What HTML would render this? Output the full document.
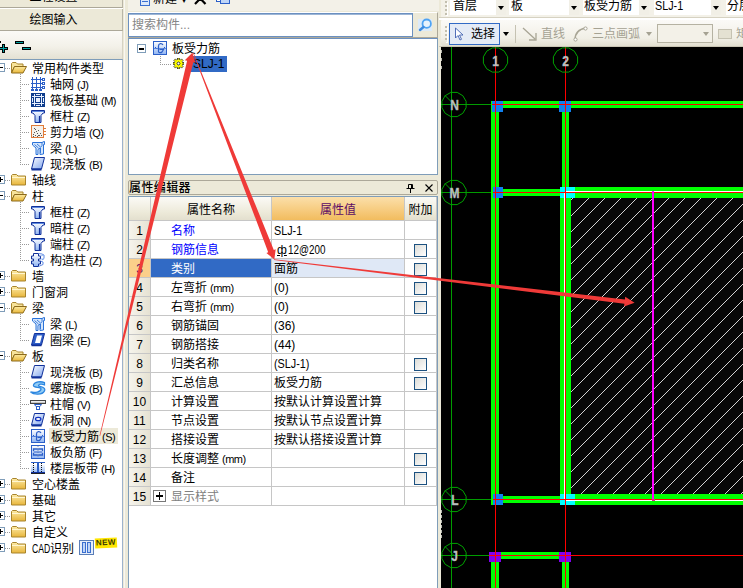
<!DOCTYPE html>
<html lang="zh"><head><meta charset="utf-8"><title>属性编辑器</title>
<style>
*{box-sizing:border-box;margin:0;padding:0}
html,body{width:743px;height:588px;overflow:hidden;background:#ECE9D8}
body{position:relative;font:12px/16px "Liberation Sans","Noto Sans CJK SC",sans-serif;color:#000}
.abs,.exp,.dh,.dv,.ic,.tx,.gh,.gn,.gc,.cb{position:absolute}
.p{letter-spacing:-0.5px;padding-left:3px;font-size:11px}
.exp{width:9px;height:9px;border:1px solid #7F9DB9;background:#fff}
.exp .h{position:absolute;left:1px;top:3px;width:5px;height:1px;background:#000}
.exp.b .h{height:2px}
.exp .v{position:absolute;left:3px;top:1px;width:1px;height:5px;background:#000}
.dh{height:1px;background-image:linear-gradient(90deg,#999 50%,transparent 50%);background-size:2px 1px}
.dv{width:1px;background-image:linear-gradient(180deg,#999 50%,transparent 50%);background-size:1px 2px}
.ic{height:16px;line-height:0}
.ic svg{display:block}
.tx{height:16px;line-height:18px;white-space:nowrap;padding:0;margin-left:0px;overflow:visible}
.tx.sel{background:#ECE9D8;padding:0 3px 0 2px}
.gh{background:linear-gradient(#FBFAF6,#ECE9D8 70%,#E3DFCE);text-align:center;line-height:26px;border-bottom:0;overflow:hidden}
.ghsel{background:linear-gradient(#FBDFAA,#F7CE84 50%,#F2BC5E);color:#5C0B66}
.gn{background:linear-gradient(90deg,#F6F4EC,#E6E2D3);text-align:center;line-height:21px;font-size:12px;overflow:hidden}
.gnsel{background:#FBCF8A;color:#5C0B66}
.gc{background:#fff;line-height:21px;white-space:nowrap;overflow:hidden}
.gcsel{background:#316AC5;color:#fff}
.phi{text-decoration:underline;padding:0 1px 0 3px}
.lt{display:inline-block;transform:scaleX(0.9);transform-origin:0 50%}
.cb{width:13px;height:13px;border:1px solid #1C5180;background:linear-gradient(135deg,#DCDCD7,#fff)}
.plus{position:absolute;left:2px;top:3px;width:13px;height:12px;border:1px solid #777;background:#fff}
.plus:before{content:"";position:absolute;left:2px;top:4px;width:7px;height:2px;background:#000}
.plus:after{content:"";position:absolute;left:5px;top:1px;width:1px;height:8px;background:#000}

.combo{top:-3px;height:18px;background:#fff;line-height:18px;padding-left:3px;white-space:nowrap;overflow:hidden}
.combo:after{content:"";position:absolute;right:0;top:0;width:10px;height:18px;background:#F1EFE6}
.combo:before{content:"";position:absolute;right:2px;top:9px;border:3px solid transparent;border-top:4px solid #000;border-bottom:0;z-index:2}
.grip{width:2px;background-image:linear-gradient(180deg,#C2BFAF 50%,transparent 50%);background-size:2px 4px;box-shadow:1px 1px 0 #fff}
.arr{width:0;height:0;border:3px solid transparent;border-top:4px solid #000;border-bottom:0}
</style></head><body>
<svg width="0" height="0" style="position:absolute"><defs><linearGradient id="gb" x1="0" y1="0" x2="0" y2="1"><stop offset="0" stop-color="#fff"/><stop offset="1" stop-color="#8FB4F2"/></linearGradient><linearGradient id="gs" x1="0" y1="0" x2="1" y2="1"><stop offset="0" stop-color="#fff"/><stop offset="1" stop-color="#7EA4EE"/></linearGradient></defs><defs><linearGradient id="fo" x1="0" y1="0" x2="0" y2="1"><stop offset="0" stop-color="#FCE9A0"/><stop offset="1" stop-color="#E9B738"/></linearGradient><linearGradient id="fc" x1="0" y1="0" x2="0" y2="1"><stop offset="0" stop-color="#FCEBA8"/><stop offset="1" stop-color="#E8B53A"/></linearGradient></defs></svg>
<!-- left panel -->
<div class="abs" style="left:0;top:-12px;width:123px;height:20px;background:#ECE9D8;border-bottom:1px solid #ACA899;border-right:1px solid #B8B5A6;text-align:center;line-height:18px;padding-right:15px">工程设置</div>
<div class="abs" style="left:0;top:8px;width:123px;height:1px;background:#fff"></div>
<div class="abs" style="left:0;top:9px;width:123px;height:22px;background:#ECE9D8;border-bottom:1px solid #ACA899;border-right:1px solid #B8B5A6;text-align:center;line-height:22px;padding-right:15px">绘图输入</div>
<div class="abs" style="left:0;top:31px;width:123px;height:28px;background:linear-gradient(#FBFAF7,#F3F1E9 55%,#E4E1D3);border-right:1px solid #D5D2C3"></div>
<div class="abs" style="left:2px;top:44px;width:3px;height:9px;background:#000"></div>
<div class="abs" style="left:-1px;top:47px;width:9px;height:3px;background:#000"></div>
<div class="abs" style="left:3px;top:45px;width:1px;height:7px;background:#00A0A0"></div>
<div class="abs" style="left:0px;top:48px;width:7px;height:1px;background:#00A0A0"></div>
<div class="abs" style="left:0px;top:41px;width:1px;height:2px;background:#000"></div>
<div class="abs" style="left:15px;top:41px;width:9px;height:3px;background:#000"></div>
<div class="abs" style="left:16px;top:42px;width:7px;height:1px;background:#00A0A0"></div>
<div class="abs" style="left:22px;top:47px;width:9px;height:3px;background:#000"></div>
<div class="abs" style="left:23px;top:48px;width:7px;height:1px;background:#00A0A0"></div>
<div class="abs" style="left:0;top:59px;width:123px;height:529px;background:#fff;border-top:1px solid #7F9DB9;border-right:1px solid #9DB2CC"></div>
<div class="exp" style="left:-4px;top:63px"><i class="h"></i></div>
<div class="dh" style="left:5px;top:68px;width:6px"></div>
<div class="ic" style="left:11px;top:62px"><svg width="16" height="12" viewBox="0 0 16 12"><path d="M0.500 1.500l1-1h3.500l1.500 1.500h5.500v2.500h-8.500l-3 6z" fill="#F7E39A" stroke="#A8842C" stroke-width="1"/><path d="M3.500 4.500h12l-3.500 6.500h-11.500z" fill="url(#fo)" stroke="#8C6A1C" stroke-width="1"/></svg></div>
<div class="tx" style="left:32px;top:60px">常用构件类型</div>
<div class="dh" style="left:20px;top:84px;width:10px"></div>
<div class="ic" style="left:31px;top:77px"><svg width="14" height="14" viewBox="0 0 14 14" ><g fill="#2B5FC8" shape-rendering="crispEdges"><rect x="1" y="0" width="1" height="13"/><rect x="5" y="0" width="1" height="13"/><rect x="9" y="0" width="1" height="13"/><rect x="0" y="2" width="12" height="1"/><rect x="0" y="6" width="12" height="1"/><rect x="0" y="10" width="12" height="1"/><rect x="0" y="12" width="3" height="2"/><rect x="4" y="12" width="3" height="2"/><rect x="8" y="12" width="3" height="2"/></g><g fill="#fff" stroke="#2B5FC8" stroke-width="1" shape-rendering="crispEdges"><rect x="11.5" y="1.5" width="2" height="2"/><rect x="11.5" y="5.5" width="2" height="2"/><rect x="11.5" y="9.5" width="2" height="2"/></g></svg></div>
<div class="tx" style="left:50px;top:76px">轴网<span class="p">(J)</span></div>
<div class="dh" style="left:20px;top:100px;width:10px"></div>
<div class="ic" style="left:31px;top:93px"><svg width="14" height="14" viewBox="0 0 14 14" ><g shape-rendering="crispEdges"><rect x="0" y="0" width="14" height="14" fill="#0E3C8C"/><g fill="#E8F0FF"><rect x="3" y="1" width="1" height="12"/><rect x="10" y="1" width="1" height="12"/><rect x="1" y="3" width="12" height="1"/><rect x="1" y="10" width="12" height="1"/><rect x="5" y="5" width="4" height="4"/><rect x="5" y="1" width="4" height="1"/><rect x="5" y="12" width="4" height="1"/><rect x="1" y="5" width="1" height="4"/><rect x="12" y="5" width="1" height="4"/></g></g></svg></div>
<div class="tx" style="left:50px;top:92px">筏板基础<span class="p">(M)</span></div>
<div class="dh" style="left:20px;top:116px;width:10px"></div>
<div class="ic" style="left:31px;top:109px"><svg width="14" height="14" viewBox="0 0 14 14" ><path d="M0.500 1.500h13v2.500h-1.500l-2 2.500v7h-6v-7l-2-2.500h-1.500z" fill="url(#gb)" stroke="#10309A" stroke-width="1"/><path d="M1 2.500h12" stroke="#5F8AE0" stroke-width="1"/><path d="M8.500 7v6" stroke="#10309A" stroke-width="1.200"/></svg></div>
<div class="tx" style="left:50px;top:108px">框柱<span class="p">(Z)</span></div>
<div class="dh" style="left:20px;top:132px;width:10px"></div>
<div class="ic" style="left:31px;top:125px"><svg width="15" height="14" viewBox="0 0 15 14" ><g shape-rendering="crispEdges"><rect x="0.5" y="0.5" width="12" height="12" fill="#F4F1EC" stroke="#E07B39" stroke-width="1"/><g fill="#555"><rect x="2" y="9" width="1" height="1"/><rect x="4" y="10" width="1" height="1"/><rect x="6" y="8" width="1" height="1"/><rect x="8" y="10" width="1" height="1"/><rect x="5" y="6" width="1" height="1"/><rect x="3" y="7" width="1" height="1"/><rect x="9" y="8" width="1" height="1"/><rect x="7" y="10" width="1" height="1"/><rect x="10" y="10" width="1" height="1"/><rect x="2" y="11" width="1" height="1"/><rect x="4" y="4" width="1" height="1"/><rect x="6" y="11" width="1" height="1"/><rect x="7" y="5" width="1" height="1"/><rect x="3" y="3" width="1" height="1"/></g><g fill="#E07B39"><rect x="12" y="3" width="3" height="1"/><rect x="12" y="6" width="3" height="1"/><rect x="12" y="9" width="3" height="1"/></g></g></svg></div>
<div class="tx" style="left:50px;top:124px">剪力墙<span class="p">(Q)</span></div>
<div class="dh" style="left:20px;top:148px;width:10px"></div>
<div class="ic" style="left:31px;top:141px"><svg width="14" height="14" viewBox="0 0 14 14" ><path d="M1.500 1.500h9.500l2-1h0.500v3h-1v9.500l-3.500 0.500v-6.500l-2 1.500v5h-2v-6.500l-3.500-3z" fill="#D5E6FB" stroke="#2A72D8" stroke-width="1"/><path d="M3.500 3.500l4 3.500M6 3l3.500 3M9.500 7v5" stroke="#2A72D8" stroke-width="0.900" fill="none"/><path d="M11 1.500v3l-1.500 2" stroke="#2A72D8" stroke-width="0.900" fill="none"/></svg></div>
<div class="tx" style="left:50px;top:140px">梁<span class="p">(L)</span></div>
<div class="dh" style="left:20px;top:164px;width:10px"></div>
<div class="ic" style="left:31px;top:157px"><svg width="14" height="14" viewBox="0 0 14 14" ><path d="M3.500 0.500h10l-3 11.500h-10z" fill="url(#gs)" stroke="#10309A" stroke-width="1"/><path d="M0.500 12.500h10" stroke="#10309A" stroke-width="2"/></svg></div>
<div class="tx" style="left:50px;top:156px">现浇板<span class="p">(B)</span></div>
<div class="exp" style="left:-4px;top:175px"><i class="h"></i><i class=v></i></div>
<div class="dh" style="left:5px;top:180px;width:6px"></div>
<div class="ic" style="left:11px;top:174px"><svg width="16" height="12" viewBox="0 0 16 12"><path d="M0.500 1.500l1-1h4l1.500 1.500h7.500v9h-14z" fill="url(#fc)" stroke="#A8842C" stroke-width="1"/><path d="M1 3.500h13" stroke="#FFF6D0" stroke-width="1"/></svg></div>
<div class="tx" style="left:32px;top:172px">轴线</div>
<div class="exp" style="left:-4px;top:191px"><i class="h"></i></div>
<div class="dh" style="left:5px;top:196px;width:6px"></div>
<div class="ic" style="left:11px;top:190px"><svg width="16" height="12" viewBox="0 0 16 12"><path d="M0.500 1.500l1-1h3.500l1.500 1.500h5.500v2.500h-8.500l-3 6z" fill="#F7E39A" stroke="#A8842C" stroke-width="1"/><path d="M3.500 4.500h12l-3.500 6.500h-11.500z" fill="url(#fo)" stroke="#8C6A1C" stroke-width="1"/></svg></div>
<div class="tx" style="left:32px;top:188px">柱</div>
<div class="dh" style="left:20px;top:212px;width:10px"></div>
<div class="ic" style="left:31px;top:205px"><svg width="14" height="14" viewBox="0 0 14 14" ><path d="M0.500 1.500h13v2.500h-1.500l-2 2.500v7h-6v-7l-2-2.500h-1.500z" fill="url(#gb)" stroke="#10309A" stroke-width="1"/><path d="M1 2.500h12" stroke="#5F8AE0" stroke-width="1"/><path d="M8.500 7v6" stroke="#10309A" stroke-width="1.200"/></svg></div>
<div class="tx" style="left:50px;top:204px">框柱<span class="p">(Z)</span></div>
<div class="dh" style="left:20px;top:228px;width:10px"></div>
<div class="ic" style="left:31px;top:221px"><svg width="14" height="14" viewBox="0 0 14 14" ><path d="M0.500 1.500h13v2.500h-1.500l-2 2.500v7h-6v-7l-2-2.500h-1.500z" fill="url(#gb)" stroke="#10309A" stroke-width="1"/><path d="M1 2.500h12" stroke="#5F8AE0" stroke-width="1"/><path d="M8.500 7v6" stroke="#10309A" stroke-width="1.200"/></svg></div>
<div class="tx" style="left:50px;top:220px">暗柱<span class="p">(Z)</span></div>
<div class="dh" style="left:20px;top:244px;width:10px"></div>
<div class="ic" style="left:31px;top:237px"><svg width="14" height="14" viewBox="0 0 14 14" ><path d="M0.500 1.500h13v2.500h-1.500l-2 2.500v7h-6v-7l-2-2.500h-1.500z" fill="url(#gb)" stroke="#10309A" stroke-width="1"/><path d="M1 2.500h12" stroke="#5F8AE0" stroke-width="1"/><path d="M8.500 7v6" stroke="#10309A" stroke-width="1.200"/></svg></div>
<div class="tx" style="left:50px;top:236px">端柱<span class="p">(Z)</span></div>
<div class="dh" style="left:20px;top:260px;width:10px"></div>
<div class="ic" style="left:31px;top:253px"><svg width="14" height="14" viewBox="0 0 14 14" ><path d="M2.500 0.500h5v2.500h2v3h-2v2h2v3h-2v2.500h-5v-2.500h-2v-3h2v-2h-2v-3h2z" fill="url(#gb)" stroke="#10309A" stroke-width="1"/><path d="M7.500 0.500l3.500 0.500l2 1v3.500l-2 1.500M9.500 8l2.500 1v2.500l-4.500 2" fill="none" stroke="#4F7EE0" stroke-width="0.900"/><path d="M9.500 3l3.500-1M9.500 6l3.500 0" stroke="#8FB4F2" stroke-width="0.900"/></svg></div>
<div class="tx" style="left:50px;top:252px">构造柱<span class="p">(Z)</span></div>
<div class="exp" style="left:-4px;top:271px"><i class="h"></i><i class=v></i></div>
<div class="dh" style="left:5px;top:276px;width:6px"></div>
<div class="ic" style="left:11px;top:270px"><svg width="16" height="12" viewBox="0 0 16 12"><path d="M0.500 1.500l1-1h4l1.500 1.500h7.500v9h-14z" fill="url(#fc)" stroke="#A8842C" stroke-width="1"/><path d="M1 3.500h13" stroke="#FFF6D0" stroke-width="1"/></svg></div>
<div class="tx" style="left:32px;top:268px">墙</div>
<div class="exp" style="left:-4px;top:287px"><i class="h"></i><i class=v></i></div>
<div class="dh" style="left:5px;top:292px;width:6px"></div>
<div class="ic" style="left:11px;top:286px"><svg width="16" height="12" viewBox="0 0 16 12"><path d="M0.500 1.500l1-1h4l1.500 1.500h7.500v9h-14z" fill="url(#fc)" stroke="#A8842C" stroke-width="1"/><path d="M1 3.500h13" stroke="#FFF6D0" stroke-width="1"/></svg></div>
<div class="tx" style="left:32px;top:284px">门窗洞</div>
<div class="exp" style="left:-4px;top:303px"><i class="h"></i></div>
<div class="dh" style="left:5px;top:308px;width:6px"></div>
<div class="ic" style="left:11px;top:302px"><svg width="16" height="12" viewBox="0 0 16 12"><path d="M0.500 1.500l1-1h3.500l1.500 1.500h5.500v2.500h-8.500l-3 6z" fill="#F7E39A" stroke="#A8842C" stroke-width="1"/><path d="M3.500 4.500h12l-3.500 6.500h-11.500z" fill="url(#fo)" stroke="#8C6A1C" stroke-width="1"/></svg></div>
<div class="tx" style="left:32px;top:300px">梁</div>
<div class="dh" style="left:20px;top:324px;width:10px"></div>
<div class="ic" style="left:31px;top:317px"><svg width="14" height="14" viewBox="0 0 14 14" ><path d="M1.500 1.500h9.500l2-1h0.500v3h-1v9.500l-3.500 0.500v-6.500l-2 1.500v5h-2v-6.500l-3.500-3z" fill="#D5E6FB" stroke="#2A72D8" stroke-width="1"/><path d="M3.500 3.500l4 3.500M6 3l3.500 3M9.500 7v5" stroke="#2A72D8" stroke-width="0.900" fill="none"/><path d="M11 1.500v3l-1.500 2" stroke="#2A72D8" stroke-width="0.900" fill="none"/></svg></div>
<div class="tx" style="left:50px;top:316px">梁<span class="p">(L)</span></div>
<div class="dh" style="left:20px;top:340px;width:10px"></div>
<div class="ic" style="left:31px;top:333px"><svg width="14" height="14" viewBox="0 0 14 14" ><path d="M3.500 0.500h10l-3 11.500h-10z" fill="#2E5EC8" stroke="#10309A" stroke-width="1"/><path d="M6 2.500h5l-2 7.500h-5z" fill="#fff"/><path d="M0.500 12.500h10" stroke="#10309A" stroke-width="1.5"/></svg></div>
<div class="tx" style="left:50px;top:332px">圈梁<span class="p">(E)</span></div>
<div class="exp" style="left:-4px;top:351px"><i class="h"></i></div>
<div class="dh" style="left:5px;top:356px;width:6px"></div>
<div class="ic" style="left:11px;top:350px"><svg width="16" height="12" viewBox="0 0 16 12"><path d="M0.500 1.500l1-1h3.500l1.500 1.500h5.500v2.500h-8.500l-3 6z" fill="#F7E39A" stroke="#A8842C" stroke-width="1"/><path d="M3.500 4.500h12l-3.500 6.500h-11.500z" fill="url(#fo)" stroke="#8C6A1C" stroke-width="1"/></svg></div>
<div class="tx" style="left:32px;top:348px">板</div>
<div class="dh" style="left:20px;top:372px;width:10px"></div>
<div class="ic" style="left:31px;top:365px"><svg width="14" height="14" viewBox="0 0 14 14" ><path d="M3.500 0.500h10l-3 11.500h-10z" fill="url(#gs)" stroke="#10309A" stroke-width="1"/><path d="M0.500 12.500h10" stroke="#10309A" stroke-width="2"/></svg></div>
<div class="tx" style="left:50px;top:364px">现浇板<span class="p">(B)</span></div>
<div class="dh" style="left:20px;top:388px;width:10px"></div>
<div class="ic" style="left:30px;top:381px"><svg width="16" height="15" viewBox="0 0 16 15" ><path d="M14.500 1.500c-3.500-1.500-10-1-11 2s8 1.500 7.500 4s-6 3.500-10.500 2.500c3 2.500 12 3 14-1s-6.500-3.500-6-5s3.500-1.500 6-0.500z" fill="#93CDF5" stroke="#2C86E0" stroke-width="1.200" transform="scale(1 1.1)"/></svg></div>
<div class="tx" style="left:50px;top:380px">螺旋板<span class="p">(B)</span></div>
<div class="dh" style="left:20px;top:404px;width:10px"></div>
<div class="ic" style="left:30px;top:398px"><svg width="16" height="13" viewBox="0 0 16 13" ><g shape-rendering="crispEdges"><rect x="0.5" y="2.5" width="15" height="3" fill="#C8C8C8" stroke="#444" stroke-width="1"/><rect x="1" y="3" width="14" height="1" fill="#eee"/></g><path d="M4.500 6.500h7l-1.500 2h-4z" fill="#fff" stroke="#2B5FC8" stroke-width="1"/><rect x="6.5" y="8.5" width="3" height="3" fill="#fff" stroke="#2B5FC8" stroke-width="1"/></svg></div>
<div class="tx" style="left:50px;top:396px">柱帽<span class="p">(V)</span></div>
<div class="dh" style="left:20px;top:420px;width:10px"></div>
<div class="ic" style="left:31px;top:413px"><svg width="14" height="14" viewBox="0 0 14 14" ><path d="M3.500 0.500h10l-3 11.500h-10z" fill="url(#gs)" stroke="#10309A" stroke-width="1"/><ellipse cx="7.200" cy="6" rx="2.700" ry="1.700" fill="#fff" stroke="#1030C0" stroke-width="1.200"/><path d="M0.500 12.500h10" stroke="#10309A" stroke-width="2"/></svg></div>
<div class="tx" style="left:50px;top:412px">板洞<span class="p">(N)</span></div>
<div class="dh" style="left:20px;top:436px;width:10px"></div>
<div class="ic" style="left:31px;top:429px"><svg width="14" height="14" viewBox="0 0 14 14" ><rect x="0.5" y="0.5" width="13" height="13" fill="url(#gb)" stroke="#2B5FC8" stroke-width="1"/><path d="M1 7.500h12" stroke="#5F8AE0" stroke-width="1"/><path d="M10 4c-1-2-4.500-2-4.500 1v5.500c0 1.500 2.500 1.500 3.500 0.500l1.500-2.500h-4" fill="none" stroke="#2B5FC8" stroke-width="1.200"/><path d="M2 6l1.500 1.500M12 6l-1.500 1.5" stroke="#2B5FC8" stroke-width="1"/></svg></div>
<div class="tx sel" style="left:49px;top:428px">板受力筋<span class="p">(S)</span></div>
<div class="dh" style="left:20px;top:452px;width:10px"></div>
<div class="ic" style="left:31px;top:445px"><svg width="14" height="14" viewBox="0 0 14 14" ><rect x="0.5" y="0.5" width="13" height="13" fill="url(#gb)" stroke="#2B5FC8" stroke-width="1"/><path d="M2.500 6v-2h9v2M2.500 8v2h9v-2" fill="none" stroke="#2B5FC8" stroke-width="1.300"/><path d="M7 1v12" stroke="#8899BB" stroke-width="1" stroke-dasharray="1 1"/><path d="M2.500 7h9" stroke="#2B5FC8" stroke-width="1"/></svg></div>
<div class="tx" style="left:50px;top:444px">板负筋<span class="p">(F)</span></div>
<div class="dh" style="left:20px;top:468px;width:10px"></div>
<div class="ic" style="left:31px;top:461px"><svg width="14" height="14" viewBox="0 0 14 14" ><g shape-rendering="crispEdges"><rect x="0" y="3" width="14" height="9" fill="url(#gb)"/><rect x="0" y="1" width="14" height="1" fill="#2B5FC8"/><rect x="0" y="11" width="14" height="1" fill="#10309A"/><rect x="0" y="12" width="14" height="1" fill="#222"/><rect x="6" y="1" width="2" height="10" fill="#2B5FC8"/><g fill="#111"><rect x="2" y="2" width="1" height="1"/><rect x="2" y="4" width="1" height="1"/><rect x="2" y="6" width="1" height="1"/><rect x="2" y="8" width="1" height="1"/><rect x="2" y="10" width="1" height="1"/><rect x="10" y="2" width="1" height="1"/><rect x="10" y="4" width="1" height="1"/><rect x="10" y="6" width="1" height="1"/><rect x="10" y="8" width="1" height="1"/><rect x="10" y="10" width="1" height="1"/></g></g></svg></div>
<div class="tx" style="left:50px;top:460px">楼层板带<span class="p">(H)</span></div>
<div class="exp" style="left:-4px;top:479px"><i class="h"></i><i class=v></i></div>
<div class="dh" style="left:5px;top:484px;width:6px"></div>
<div class="ic" style="left:11px;top:478px"><svg width="16" height="12" viewBox="0 0 16 12"><path d="M0.500 1.500l1-1h4l1.500 1.500h7.500v9h-14z" fill="url(#fc)" stroke="#A8842C" stroke-width="1"/><path d="M1 3.500h13" stroke="#FFF6D0" stroke-width="1"/></svg></div>
<div class="tx" style="left:32px;top:476px">空心楼盖</div>
<div class="exp" style="left:-4px;top:495px"><i class="h"></i><i class=v></i></div>
<div class="dh" style="left:5px;top:500px;width:6px"></div>
<div class="ic" style="left:11px;top:494px"><svg width="16" height="12" viewBox="0 0 16 12"><path d="M0.500 1.500l1-1h4l1.500 1.500h7.500v9h-14z" fill="url(#fc)" stroke="#A8842C" stroke-width="1"/><path d="M1 3.500h13" stroke="#FFF6D0" stroke-width="1"/></svg></div>
<div class="tx" style="left:32px;top:492px">基础</div>
<div class="exp" style="left:-4px;top:511px"><i class="h"></i><i class=v></i></div>
<div class="dh" style="left:5px;top:516px;width:6px"></div>
<div class="ic" style="left:11px;top:510px"><svg width="16" height="12" viewBox="0 0 16 12"><path d="M0.500 1.500l1-1h4l1.500 1.500h7.500v9h-14z" fill="url(#fc)" stroke="#A8842C" stroke-width="1"/><path d="M1 3.500h13" stroke="#FFF6D0" stroke-width="1"/></svg></div>
<div class="tx" style="left:32px;top:508px">其它</div>
<div class="exp" style="left:-4px;top:527px"><i class="h"></i><i class=v></i></div>
<div class="dh" style="left:5px;top:532px;width:6px"></div>
<div class="ic" style="left:11px;top:526px"><svg width="16" height="12" viewBox="0 0 16 12"><path d="M0.500 1.500l1-1h4l1.500 1.500h7.500v9h-14z" fill="url(#fc)" stroke="#A8842C" stroke-width="1"/><path d="M1 3.500h13" stroke="#FFF6D0" stroke-width="1"/></svg></div>
<div class="tx" style="left:32px;top:524px">自定义</div>
<div class="exp" style="left:-4px;top:543px"><i class="h"></i><i class=v></i></div>
<div class="dh" style="left:5px;top:548px;width:6px"></div>
<div class="ic" style="left:11px;top:542px"><svg width="16" height="12" viewBox="0 0 16 12"><path d="M0.500 1.500l1-1h4l1.500 1.500h7.500v9h-14z" fill="url(#fc)" stroke="#A8842C" stroke-width="1"/><path d="M1 3.500h13" stroke="#FFF6D0" stroke-width="1"/></svg></div>
<div class="tx" style="left:32px;top:540px"><span style="display:inline-block;width:18px;height:16px;vertical-align:top;transform:scaleX(0.72);transform-origin:0 0;white-space:nowrap">CAD</span>识别</div>
<div class="dv" style="left:20px;top:74px;height:90px"></div>
<div class="dv" style="left:20px;top:202px;height:58px"></div>
<div class="dv" style="left:20px;top:314px;height:26px"></div>
<div class="dv" style="left:20px;top:362px;height:106px"></div>
<div class="abs" style="left:79px;top:540px;width:15px;height:15px;border:1px solid #5A7EB8;background:#E6EEFA"></div>
<div class="abs" style="left:82px;top:542px;width:4px;height:11px;border:1px solid #3A6FD0;background:#BFD5F7"></div>
<div class="abs" style="left:87px;top:542px;width:4px;height:11px;border:1px solid #3A6FD0;background:#BFD5F7"></div>
<div class="abs" style="left:95px;top:538px;width:22px;height:10px;background:#FFE600;color:#3a3a00;font-weight:bold;font-size:8px;line-height:10px;letter-spacing:0.5px;text-align:center;transform:rotate(-3deg);overflow:hidden">NEW</div>

<div class="abs" style="left:124px;top:0;width:1px;height:588px;background:#F8F7F2"></div>
<!-- middle panel -->
<div class="abs" style="left:128px;top:0;width:311px;height:11px;background:#F3F1E8"></div>
<div class="abs" style="left:153px;top:-9px;line-height:16px;white-space:nowrap">新建<span style="font-size:8px;padding-left:5px">▾</span></div>
<div class="abs" style="left:140px;top:-4px;width:10px;height:10px;border:1px solid #3A6FD0;background:#DCE8FA"></div>
<div class="abs" style="left:142px;top:1px;width:6px;height:1px;background:#3A6FD0"></div>
<svg class="abs" style="left:194px;top:-7px" width="13" height="12" viewBox="0 0 13 12"><path d="M1 0l10.500 11M11.500 0l-10.500 11" stroke="#000" stroke-width="2.200"/></svg>
<div class="abs" style="left:216px;top:-6px;width:9px;height:8px;border:1px solid #2B5FC8;background:#fff"></div>
<div class="abs" style="left:220px;top:-4px;width:10px;height:8px;border:1px solid #2B5FC8;background:#BFD5F7"></div>
<div class="abs" style="left:128px;top:12px;width:310px;height:26px;background:#ECE9D8;border-top:1px solid #fff;border-right:1px solid #ACA899;border-bottom:1px solid #ACA899"></div>
<div class="abs" style="left:128px;top:13px;width:285px;height:24px;background:#fff;border:1px solid #6B90C0;box-shadow:inset 0 1px 0 #9DB6D6;color:#868686;line-height:23px;padding-left:3px">搜索构件...</div>
<div class="abs" style="left:418px;top:19px;width:14px;height:12px;background:#DCEAF8"></div>
<svg class="abs" style="left:417px;top:17px" width="18" height="16" viewBox="0 0 18 16"><circle cx="9.700" cy="6.700" r="4.200" fill="#E8F2FC" stroke="#4FA3F2" stroke-width="1.800"/><path d="M6.500 10l-3.500 3" stroke="#3D8BE0" stroke-width="2.400" stroke-linecap="round"/></svg>
<div class="abs" style="left:128px;top:38px;width:310px;height:137px;background:#fff;border:1px solid #7F9DB9;border-top:1px solid #6B90C0"></div>
<div class="exp b" style="left:137px;top:44px"><i class="h"></i></div>
<div class="ic" style="left:153px;top:41px"><svg width="14" height="14" viewBox="0 0 14 14" ><rect x="0.5" y="0.5" width="13" height="13" fill="url(#gb)" stroke="#2B5FC8" stroke-width="1"/><path d="M1 7.500h12" stroke="#5F8AE0" stroke-width="1"/><path d="M10 4c-1-2-4.500-2-4.500 1v5.500c0 1.500 2.500 1.500 3.500 0.500l1.500-2.500h-4" fill="none" stroke="#2B5FC8" stroke-width="1.200"/><path d="M2 6l1.500 1.500M12 6l-1.500 1.5" stroke="#2B5FC8" stroke-width="1"/></svg></div>
<div class="tx" style="left:172px;top:40px">板受力筋</div>
<div class="dv" style="left:160px;top:56px;height:8px"></div>
<div class="dh" style="left:160px;top:64px;width:12px"></div>
<svg class="abs" style="left:173px;top:58px" width="11" height="11" viewBox="-5.5 -5.5 11 11"><g fill="#FFFF00" stroke="#222" stroke-width="0.7"><rect x="-1.1" y="-5.4" width="2.2" height="2.4" transform="rotate(0)"/><rect x="-1.1" y="-5.4" width="2.2" height="2.4" transform="rotate(45)"/><rect x="-1.1" y="-5.4" width="2.2" height="2.4" transform="rotate(90)"/><rect x="-1.1" y="-5.4" width="2.2" height="2.4" transform="rotate(135)"/><rect x="-1.1" y="-5.4" width="2.2" height="2.4" transform="rotate(180)"/><rect x="-1.1" y="-5.4" width="2.2" height="2.4" transform="rotate(225)"/><rect x="-1.1" y="-5.4" width="2.2" height="2.4" transform="rotate(270)"/><rect x="-1.1" y="-5.4" width="2.2" height="2.4" transform="rotate(315)"/><circle r="3.5"/><circle r="1.3" fill="#fff"/></g><circle r="3.1" fill="none" stroke="#FFFF00" stroke-width="1.4"/><circle r="1.4" fill="#fff" stroke="#222" stroke-width="0.7"/></svg>
<div class="abs" style="left:190px;top:56px;width:37px;height:16px;background:#316AC5;line-height:16px;padding-left:3px;color:#000">SLJ-1</div>
<div class="abs" style="left:128px;top:180px;width:310px;height:15px;line-height:14px;border:1px solid #ACA899;border-radius:2px;font-weight:500;letter-spacing:0.4px">属性编辑器</div>
<svg class="abs" style="left:406px;top:184px" width="9" height="9" viewBox="0 0 9 9"><path d="M2.500 0.500h4M2.500 0.500v4M5.500 0.500v4M6.500 0.500v4M0.500 4.500h8M4.500 5v4" stroke="#000" fill="none"/></svg>
<svg class="abs" style="left:425px;top:184px" width="8" height="8" viewBox="0 0 8 8"><path d="M0.500 0.500l7 7M7.500 0.500l-7 7" stroke="#000" stroke-width="1.100"/></svg>
<div class="abs" style="left:128px;top:196px;width:310px;height:392px;background:#fff;border:1px solid #7F9DB9;border-bottom:0"></div>
<div class="abs" style="left:129px;top:197px;width:308px;height:309px;background:#C6C6C6"></div>
<div class="gh" style="left:129px;top:197px;width:21px;height:23px"></div>
<div class="gh" style="left:151px;top:197px;width:120px;height:23px">属性名称</div>
<div class="gh ghsel" style="left:272px;top:197px;width:132px;height:23px">属性值</div>
<div class="gh" style="left:405px;top:197px;width:31px;height:23px">附加</div>
<div class="gn" style="left:129px;top:221px;width:21px;height:18px">1</div>
<div class="gc" style="left:151px;top:221px;width:120px;height:18px;color:#0000FF;"><span style="padding-left:20px">名称</span></div>
<div class="gc" style="left:272px;top:221px;width:132px;height:18px"><span style="padding-left:2px"><span class="lt">SLJ-1</span></span></div>
<div class="gc" style="left:405px;top:221px;width:31px;height:18px"></div>
<div class="gn" style="left:129px;top:240px;width:21px;height:18px">2</div>
<div class="gc" style="left:151px;top:240px;width:120px;height:18px;color:#0000FF;"><span style="padding-left:20px">钢筋信息</span></div>
<div class="gc" style="left:272px;top:240px;width:132px;height:18px"><span style="padding-left:2px"><span class="phi">ф</span><span class="lt" style="transform:scaleX(0.82)">12@200</span></span></div>
<div class="gc" style="left:405px;top:240px;width:31px;height:18px"></div>
<div class="cb" style="left:414px;top:244px"></div>
<div class="gn gnsel" style="left:129px;top:259px;width:21px;height:18px">3</div>
<div class="gc gcsel" style="left:151px;top:259px;width:120px;height:18px"><span style="padding-left:20px">类别</span></div>
<div class="gc" style="left:272px;top:259px;width:132px;height:18px;background:#DFE8F6"><span style="padding-left:2px">面筋</span></div>
<div class="gc" style="left:405px;top:259px;width:31px;height:18px"></div>
<div class="cb" style="left:414px;top:263px"></div>
<div class="gn" style="left:129px;top:278px;width:21px;height:18px">4</div>
<div class="gc" style="left:151px;top:278px;width:120px;height:18px;"><span style="padding-left:20px">左弯折<span class="p">(mm)</span></span></div>
<div class="gc" style="left:272px;top:278px;width:132px;height:18px"><span style="padding-left:2px">(0)</span></div>
<div class="gc" style="left:405px;top:278px;width:31px;height:18px"></div>
<div class="cb" style="left:414px;top:282px"></div>
<div class="gn" style="left:129px;top:297px;width:21px;height:18px">5</div>
<div class="gc" style="left:151px;top:297px;width:120px;height:18px;"><span style="padding-left:20px">右弯折<span class="p">(mm)</span></span></div>
<div class="gc" style="left:272px;top:297px;width:132px;height:18px"><span style="padding-left:2px">(0)</span></div>
<div class="gc" style="left:405px;top:297px;width:31px;height:18px"></div>
<div class="cb" style="left:414px;top:301px"></div>
<div class="gn" style="left:129px;top:316px;width:21px;height:18px">6</div>
<div class="gc" style="left:151px;top:316px;width:120px;height:18px;"><span style="padding-left:20px">钢筋锚固</span></div>
<div class="gc" style="left:272px;top:316px;width:132px;height:18px"><span style="padding-left:2px">(36)</span></div>
<div class="gc" style="left:405px;top:316px;width:31px;height:18px"></div>
<div class="gn" style="left:129px;top:335px;width:21px;height:18px">7</div>
<div class="gc" style="left:151px;top:335px;width:120px;height:18px;"><span style="padding-left:20px">钢筋搭接</span></div>
<div class="gc" style="left:272px;top:335px;width:132px;height:18px"><span style="padding-left:2px">(44)</span></div>
<div class="gc" style="left:405px;top:335px;width:31px;height:18px"></div>
<div class="gn" style="left:129px;top:354px;width:21px;height:18px">8</div>
<div class="gc" style="left:151px;top:354px;width:120px;height:18px;"><span style="padding-left:20px">归类名称</span></div>
<div class="gc" style="left:272px;top:354px;width:132px;height:18px"><span style="padding-left:2px"><span class="lt">(SLJ-1)</span></span></div>
<div class="gc" style="left:405px;top:354px;width:31px;height:18px"></div>
<div class="cb" style="left:414px;top:358px"></div>
<div class="gn" style="left:129px;top:373px;width:21px;height:18px">9</div>
<div class="gc" style="left:151px;top:373px;width:120px;height:18px;"><span style="padding-left:20px">汇总信息</span></div>
<div class="gc" style="left:272px;top:373px;width:132px;height:18px"><span style="padding-left:2px">板受力筋</span></div>
<div class="gc" style="left:405px;top:373px;width:31px;height:18px"></div>
<div class="cb" style="left:414px;top:377px"></div>
<div class="gn" style="left:129px;top:392px;width:21px;height:18px">10</div>
<div class="gc" style="left:151px;top:392px;width:120px;height:18px;"><span style="padding-left:20px">计算设置</span></div>
<div class="gc" style="left:272px;top:392px;width:132px;height:18px"><span style="padding-left:2px">按默认计算设置计算</span></div>
<div class="gc" style="left:405px;top:392px;width:31px;height:18px"></div>
<div class="gn" style="left:129px;top:411px;width:21px;height:18px">11</div>
<div class="gc" style="left:151px;top:411px;width:120px;height:18px;"><span style="padding-left:20px">节点设置</span></div>
<div class="gc" style="left:272px;top:411px;width:132px;height:18px"><span style="padding-left:2px">按默认节点设置计算</span></div>
<div class="gc" style="left:405px;top:411px;width:31px;height:18px"></div>
<div class="gn" style="left:129px;top:430px;width:21px;height:18px">12</div>
<div class="gc" style="left:151px;top:430px;width:120px;height:18px;"><span style="padding-left:20px">搭接设置</span></div>
<div class="gc" style="left:272px;top:430px;width:132px;height:18px"><span style="padding-left:2px">按默认搭接设置计算</span></div>
<div class="gc" style="left:405px;top:430px;width:31px;height:18px"></div>
<div class="gn" style="left:129px;top:449px;width:21px;height:18px">13</div>
<div class="gc" style="left:151px;top:449px;width:120px;height:18px;"><span style="padding-left:20px">长度调整<span class="p">(mm)</span></span></div>
<div class="gc" style="left:272px;top:449px;width:132px;height:18px"><span style="padding-left:2px"></span></div>
<div class="gc" style="left:405px;top:449px;width:31px;height:18px"></div>
<div class="cb" style="left:414px;top:453px"></div>
<div class="gn" style="left:129px;top:468px;width:21px;height:18px">14</div>
<div class="gc" style="left:151px;top:468px;width:120px;height:18px;"><span style="padding-left:20px">备注</span></div>
<div class="gc" style="left:272px;top:468px;width:132px;height:18px"><span style="padding-left:2px"></span></div>
<div class="gc" style="left:405px;top:468px;width:31px;height:18px"></div>
<div class="cb" style="left:414px;top:472px"></div>
<div class="gn" style="left:129px;top:487px;width:21px;height:18px">15</div>
<div class="gc" style="left:151px;top:487px;width:120px;height:18px;color:#808080"><span class="plus"></span><span style="padding-left:20px">显示样式</span></div>
<div class="gc" style="left:272px;top:487px;width:132px;height:18px"></div>
<div class="gc" style="left:405px;top:487px;width:31px;height:18px"></div>

<!-- right: toolbars -->
<div class="abs" style="left:441px;top:0;width:302px;height:47px;background:#F3F1E8"></div>
<div class="abs" style="left:439px;top:17px;width:304px;height:1px;background:#D6D2C2"></div>
<div class="abs" style="left:439px;top:18px;width:304px;height:2px;background:#fff"></div>
<div class="abs" style="left:441px;top:20px;width:302px;height:26px;background:linear-gradient(#FBFAF7,#F1EFE6 70%,#E2DFD0);border-radius:2px 0 0 2px"></div>
<div class="abs" style="left:439px;top:46px;width:304px;height:1px;background:#C9C5B4"></div>
<div class="abs combo" style="left:450px;width:56px">首层</div>
<div class="abs combo" style="left:509px;width:70px;padding-left:2px">板</div>
<div class="abs combo" style="left:583px;width:66px;padding-left:1px">板受力筋</div>
<div class="abs combo" style="left:654px;width:67px;padding-left:1px"><span class="lt">SLJ-1</span></div>
<div class="abs combo" style="left:726px;width:40px;padding-left:1px">分层</div>
<div class="abs grip" style="left:445px;top:1px;height:14px"></div>
<div class="abs grip" style="left:445px;top:26px;height:16px"></div>
<div class="abs" style="left:449px;top:23px;width:51px;height:22px;border:1px solid #316AC5;background:#E4EBF6;line-height:20px;padding-left:21px;white-space:nowrap">选择</div>
<svg class="abs" style="left:454px;top:27px" width="10" height="14" viewBox="0 0 10 14"><path d="M1.500 1v10l2.500-2.500l2 4.500l1.500-0.700l-2-4.300h3.500z" fill="#fff" stroke="#4060B0" stroke-width="0.900"/></svg>
<div class="abs arr" style="left:503px;top:32px"></div>
<div class="abs" style="left:515px;top:25px;width:1px;height:18px;background:#C5C2B2"></div>
<svg class="abs" style="left:522px;top:27px" width="16" height="14" viewBox="0 0 16 14"><path d="M1 1l12 11M14 6v7h-7" stroke="#A8A595" stroke-width="1.300" fill="none"/></svg>
<div class="abs" style="left:541px;top:24px;line-height:20px;color:#A5A293">直线</div>
<svg class="abs" style="left:573px;top:26px" width="15" height="16" viewBox="0 0 15 16"><path d="M2 14c0-7 4-11 11-12" stroke="#A8A595" stroke-width="1.5" fill="none"/><circle cx="2.5" cy="13.5" r="1.600" fill="#fff" stroke="#A8A595"/><circle cx="12.5" cy="2.5" r="1.600" fill="#fff" stroke="#A8A595"/></svg>
<div class="abs" style="left:592px;top:24px;line-height:20px;color:#A5A293;white-space:nowrap">三点画弧</div>
<div class="abs arr" style="left:646px;top:32px;border-top-color:#A5A293"></div>
<div class="abs" style="left:657px;top:24px;width:56px;height:19px;border:1px solid #B5B2A2;background:#F3F1E8"></div>
<div class="abs arr" style="left:703px;top:32px;border-top-color:#A5A293"></div>
<div class="abs" style="left:718px;top:29px;width:14px;height:10px;border:1px solid #C5C2B2;background:#E4E1D2"></div>
<div class="abs" style="left:736px;top:24px;line-height:20px;color:#A5A293;white-space:nowrap">矩形</div>
<svg style="position:absolute;left:441px;top:47px" width="302" height="541" viewBox="441 47 302 541" shape-rendering="crispEdges">
<rect x="441" y="47" width="302" height="541" fill="#000"/>
<defs><clipPath id="hc"><rect x="571" y="198" width="172" height="296"/></clipPath></defs>
<rect x="571" y="198" width="172" height="296" fill="#070707"/>
<g clip-path="url(#hc)" stroke="#dcdcdc" stroke-width="0.95" shape-rendering="crispEdges">
<line x1="557.3" y1="198" x2="261.3" y2="494"/>
<line x1="573.3" y1="198" x2="277.3" y2="494"/>
<line x1="589.3" y1="198" x2="293.3" y2="494"/>
<line x1="605.3" y1="198" x2="309.3" y2="494"/>
<line x1="621.3" y1="198" x2="325.3" y2="494"/>
<line x1="637.3" y1="198" x2="341.3" y2="494"/>
<line x1="653.3" y1="198" x2="357.3" y2="494"/>
<line x1="669.3" y1="198" x2="373.3" y2="494"/>
<line x1="685.3" y1="198" x2="389.3" y2="494"/>
<line x1="701.3" y1="198" x2="405.3" y2="494"/>
<line x1="717.3" y1="198" x2="421.3" y2="494"/>
<line x1="733.3" y1="198" x2="437.3" y2="494"/>
<line x1="749.3" y1="198" x2="453.3" y2="494"/>
<line x1="765.3" y1="198" x2="469.3" y2="494"/>
<line x1="781.3" y1="198" x2="485.3" y2="494"/>
<line x1="797.3" y1="198" x2="501.3" y2="494"/>
<line x1="813.3" y1="198" x2="517.3" y2="494"/>
<line x1="829.3" y1="198" x2="533.3" y2="494"/>
<line x1="845.3" y1="198" x2="549.3" y2="494"/>
<line x1="861.3" y1="198" x2="565.3" y2="494"/>
<line x1="877.3" y1="198" x2="581.3" y2="494"/>
<line x1="893.3" y1="198" x2="597.3" y2="494"/>
<line x1="909.3" y1="198" x2="613.3" y2="494"/>
<line x1="925.3" y1="198" x2="629.3" y2="494"/>
<line x1="941.3" y1="198" x2="645.3" y2="494"/>
<line x1="957.3" y1="198" x2="661.3" y2="494"/>
<line x1="973.3" y1="198" x2="677.3" y2="494"/>
<line x1="989.3" y1="198" x2="693.3" y2="494"/>
<line x1="1005.3" y1="198" x2="709.3" y2="494"/>
<line x1="1021.3" y1="198" x2="725.3" y2="494"/>
<line x1="1037.3" y1="198" x2="741.3" y2="494"/>
<line x1="1053.3" y1="198" x2="757.3" y2="494"/>
</g>
<rect x="451" y="47" width="1" height="541" fill="#009C00"/>
<rect x="441" y="104" width="60" height="1" fill="#009C00"/>
<rect x="441" y="192" width="60" height="1" fill="#009C00"/>
<rect x="441" y="499" width="60" height="1" fill="#009C00"/>
<rect x="441" y="555" width="60" height="1" fill="#009C00"/>
<rect x="491" y="101" width="8" height="404" fill="#00FF00"/>
<rect x="491" y="552" width="8" height="40" fill="#00FF00"/>
<rect x="562" y="101" width="7" height="92" fill="#00FF00"/>
<rect x="560" y="188" width="11" height="317" fill="#00FF00"/>
<rect x="562" y="552" width="7" height="40" fill="#00FF00"/>
<rect x="491" y="101" width="260" height="7" fill="#00FF00"/>
<rect x="495" y="189" width="70" height="7" fill="#00FF00"/>
<rect x="565" y="187" width="180" height="11" fill="#00FF00"/>
<rect x="495" y="496" width="70" height="7" fill="#00FF00"/>
<rect x="565" y="494" width="180" height="11" fill="#00FF00"/>
<rect x="495" y="552" width="70" height="7" fill="#00FF00"/>
<rect x="564" y="193" width="1" height="306" fill="#FFFFFF"/>
<rect x="565" y="191" width="180" height="1" fill="#FFFFFF"/>
<rect x="565" y="500" width="180" height="1" fill="#FFFFFF"/>
<rect x="495" y="47" width="1" height="541" fill="#FF0000"/>
<rect x="565" y="47" width="1" height="541" fill="#FF0000"/>
<rect x="493" y="104" width="260" height="1" fill="#FF0000"/>
<rect x="493" y="192" width="260" height="1" fill="#FF0000"/>
<rect x="493" y="499" width="260" height="1" fill="#FF0000"/>
<rect x="489" y="555" width="260" height="1" fill="#FF0000"/>
<rect x="652" y="191" width="2" height="310" fill="#FF00FF"/>
<rect x="652" y="499" width="3" height="2" fill="#E0208A"/>
<rect x="492" y="101" width="11" height="11" fill="#1080F0"/>
<rect x="559" y="101" width="12" height="11" fill="#1080F0"/>
<rect x="493" y="187" width="10" height="11" fill="#1080F0"/>
<rect x="493" y="494" width="10" height="11" fill="#1080F0"/>
<rect x="560" y="187" width="15" height="11" fill="#00FFFF"/>
<rect x="560" y="494" width="15" height="11" fill="#00FFFF"/>
<rect x="489" y="552" width="12" height="10" fill="#8000F0"/>
<rect x="559" y="552" width="12" height="10" fill="#8000F0"/>
<rect x="495" y="101" width="1" height="11" fill="#FF0000"/>
<rect x="565" y="101" width="1" height="11" fill="#FF0000"/>
<rect x="492" y="104" width="11" height="1" fill="#FF0000"/>
<rect x="559" y="104" width="12" height="1" fill="#FF0000"/>
<rect x="495" y="187" width="1" height="11" fill="#FF0000"/>
<rect x="493" y="192" width="10" height="1" fill="#FF0000"/>
<rect x="495" y="494" width="1" height="11" fill="#FF0000"/>
<rect x="493" y="499" width="10" height="1" fill="#FF0000"/>
<rect x="565" y="187" width="1" height="11" fill="#FF0000"/>
<rect x="564" y="193" width="1" height="5" fill="#FFFFFF"/>
<rect x="560" y="192" width="15" height="1" fill="#FF0000"/>
<rect x="566" y="191" width="9" height="1" fill="#FFFFFF"/>
<rect x="565" y="494" width="1" height="11" fill="#FF0000"/>
<rect x="564" y="494" width="1" height="6" fill="#FFFFFF"/>
<rect x="560" y="499" width="15" height="1" fill="#FF0000"/>
<rect x="566" y="500" width="9" height="1" fill="#FFFFFF"/>
<rect x="495" y="552" width="1" height="10" fill="#FF0000"/>
<rect x="565" y="552" width="1" height="10" fill="#FF0000"/>
<rect x="489" y="555" width="12" height="1" fill="#FF0000"/>
<rect x="559" y="555" width="12" height="1" fill="#FF0000"/>
<rect x="441" y="50" width="1" height="3" fill="#b8b8b0"/>
<rect x="441" y="58" width="1" height="3" fill="#b8b8b0"/>
<rect x="441" y="66" width="1" height="3" fill="#b8b8b0"/>
<rect x="441" y="510" width="1" height="3" fill="#b8b8b0"/>
<rect x="441" y="515" width="1" height="3" fill="#b8b8b0"/>
<rect x="441" y="520" width="1" height="3" fill="#b8b8b0"/>
<rect x="441" y="525" width="1" height="3" fill="#b8b8b0"/>
<rect x="441" y="530" width="1" height="3" fill="#b8b8b0"/>
<rect x="441" y="535" width="1" height="3" fill="#b8b8b0"/>
<g shape-rendering="auto" fill="none" stroke="#00A400" stroke-width="1">
<polygon points="507.6,63.2 504.3,68.8 498.7,72.1 492.3,72.1 486.7,68.8 483.4,63.2 483.4,56.8 486.7,51.2 492.3,47.9 498.7,47.9 504.3,51.2 507.6,56.8"/>
<polygon points="577.6,63.2 574.3,68.8 568.7,72.1 562.3,72.1 556.7,68.8 553.4,63.2 553.4,56.8 556.7,51.2 562.3,47.9 568.7,47.9 574.3,51.2 577.6,56.8"/>
<polygon points="466.1,107.7 462.8,113.3 457.2,116.6 450.8,116.6 445.2,113.3 441.9,107.7 441.9,101.3 445.2,95.7 450.8,92.4 457.2,92.4 462.8,95.7 466.1,101.3"/>
<polygon points="466.1,195.7 462.8,201.3 457.2,204.6 450.8,204.6 445.2,201.3 441.9,195.7 441.9,189.3 445.2,183.7 450.8,180.4 457.2,180.4 462.8,183.7 466.1,189.3"/>
<polygon points="466.1,502.7 462.8,508.3 457.2,511.6 450.8,511.6 445.2,508.3 441.9,502.7 441.9,496.3 445.2,490.7 450.8,487.4 457.2,487.4 462.8,490.7 466.1,496.3"/>
<polygon points="466.1,558.7 462.8,564.3 457.2,567.6 450.8,567.6 445.2,564.3 441.9,558.7 441.9,552.3 445.2,546.7 450.8,543.4 457.2,543.4 462.8,546.7 466.1,552.3"/>
<line x1="445" y1="95.5" x2="454" y2="104.5"/>
<line x1="445" y1="183.5" x2="454" y2="192.5"/>
<line x1="445" y1="490.5" x2="454" y2="499.5"/>
<line x1="445" y1="546.5" x2="454" y2="555.5"/>
</g>
<g shape-rendering="auto" font-family="Liberation Sans,sans-serif" font-size="15" font-weight="bold" fill="#c4c4c4" stroke="#9aa" stroke-width="0.400" text-anchor="middle">
<text transform="translate(495.5 65.5) scale(0.8 1)">1</text>
<text transform="translate(565.5 65.5) scale(0.8 1)">2</text>
<text transform="translate(454.5 110) scale(0.8 1)">N</text>
<text transform="translate(454.5 198) scale(0.8 1)">M</text>
<text transform="translate(455 505) scale(0.8 1)">L</text>
<text transform="translate(454.5 561) scale(0.8 1)">J</text>
</g>
</svg>
<svg style="position:absolute;left:0;top:0;pointer-events:none" width="743" height="588" viewBox="0 0 743 588"><g fill="#EF3A38">
<polygon points="100.1,436.1 193.3,62.3 195.5,62.8 192.3,52.8 184.8,60.3 187.1,60.8 99.5,435.9"/>
<polygon points="193.0,53.1 268.2,252.2 266.4,252.9 274.3,259.5 275.7,249.3 273.8,250.0 193.6,52.9"/>
<polygon points="274.0,260.0 624.4,303.7 624.1,306.4 634.6,302.8 625.2,296.8 624.9,299.5 274.0,259.2"/>
</g></svg>
</body></html>
